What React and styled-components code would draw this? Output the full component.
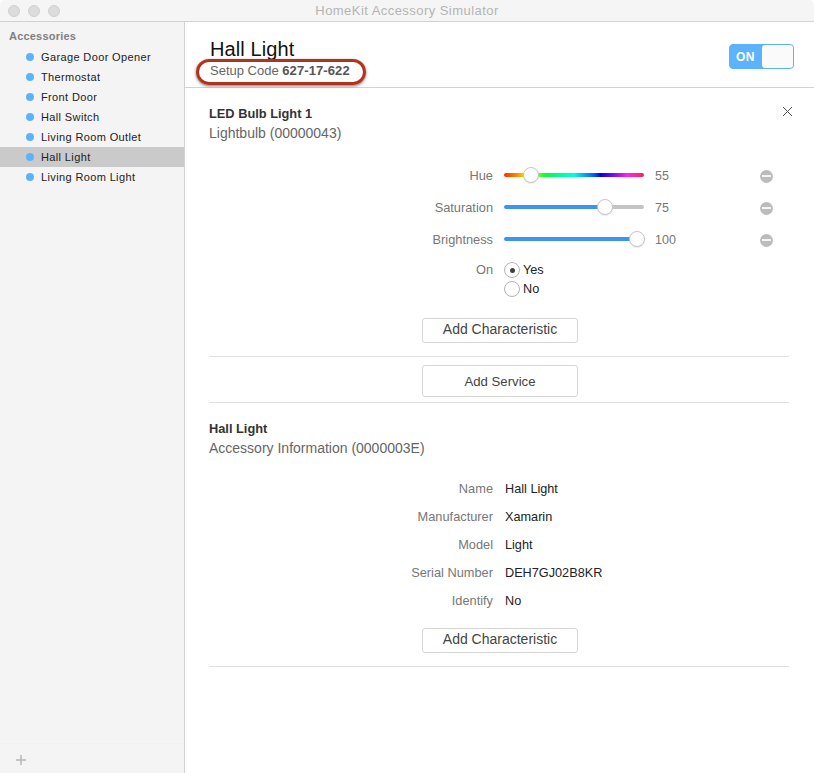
import React from 'react';
import styled, { createGlobalStyle } from 'styled-components';

const GlobalStyle = createGlobalStyle`
    html, body {
        margin: 0;
        padding: 0;
        background: #fff;
    }
    body {
        font-family: "Liberation Sans", Arial, sans-serif;
        color: #222;
    }
`;

const Window = styled.div`
    width: 814px;
    height: 773px;
    display: flex;
    flex-direction: column;
    overflow: hidden;
    background: #fff;
`;
const TitleBar = styled.header`
    position: relative;
    height: 21px;
    flex: none;
    display: flex;
    align-items: center;
    justify-content: center;
    background: #f5f5f5;
    border-bottom: 1px solid #d2d2d2;
    border-radius: 5px 5px 0 0;
`;
const Lights = styled.div`
    position: absolute;
    left: 8px;
    top: 5px;
    display: flex;
    gap: 8px;
`;
const Light = styled.span`
    width: 12px;
    height: 12px;
    border-radius: 50%;
    background: #dcdcdc;
    border: 1px solid #d0d0d0;
    box-sizing: border-box;
`;
const WindowTitle = styled.h1`
    margin: 0;
    font-size: 13px;
    font-weight: normal;
    color: #b4b4b4;
    letter-spacing: 0.45px;
`;
const Body = styled.div`
    flex: 1;
    display: flex;
    min-height: 0;
`;
const Sidebar = styled.aside`
    width: 184px;
    flex: none;
    display: flex;
    flex-direction: column;
    background: #f4f4f4;
    border-right: 1px solid #d2d2d2;
`;
const SideHead = styled.div`
    font-size: 11px;
    font-weight: bold;
    color: #808080;
    padding: 7px 0 4px 9px;
    line-height: 14px;
    letter-spacing: 0.2px;
`;
const SideList = styled.ul`
    list-style: none;
    margin: 0;
    padding: 0;
    flex: 1;
`;
const SideItem = styled.li`
    height: 20px;
    display: flex;
    align-items: center;
    padding-left: 26px;
    gap: 7px;
    font-size: 11px;
    letter-spacing: 0.37px;
    color: #222;
    background: ${p => (p.$active ? '#cacaca' : 'transparent')};
`;
const Dot = styled.span`
    width: 8px;
    height: 8px;
    border-radius: 50%;
    background: #5bb4fb;
`;
const SideFooter = styled.div`
    height: 30px;
    box-sizing: border-box;
    display: flex;
    align-items: center;
    padding: 2px 0 0 15px;
    border-top: 1px solid #f0f0f0;
`;
const Main = styled.main`
    flex: 1;
    min-width: 0;
    display: flex;
    flex-direction: column;
`;
const Header = styled.div`
    height: 66px;
    flex: none;
    box-sizing: border-box;
    padding: 16px 20px 0 25px;
    display: flex;
    justify-content: space-between;
    align-items: flex-start;
    border-bottom: 1px solid #d2d2d2;
`;
const HeaderText = styled.div`
    display: flex;
    flex-direction: column;
`;
const Title = styled.h2`
    margin: 0;
    font-size: 20px;
    line-height: 22px;
    font-weight: normal;
    color: #111;
    letter-spacing: 0.1px;
`;
const SetupCode = styled.div`
    position: relative;
    margin-top: 3px;
    font-size: 13px;
    line-height: 16px;
    color: #666;
    &::after {
        content: '';
        position: absolute;
        left: -14px;
        top: -4px;
        width: 170px;
        height: 26px;
        box-sizing: border-box;
        border: 3px solid #b3321c;
        border-radius: 13px;
        box-shadow: 0 1px 3px rgba(0, 0, 0, 0.55);
    }
    b {
        color: #555;
        letter-spacing: 0.1px;
    }
`;
const Toggle = styled.div`
    width: 65px;
    height: 25px;
    margin-top: 6px;
    box-sizing: border-box;
    border-radius: 4px;
    background: #5cb3fb;
    border: 1px solid #5cb3fb;
    display: flex;
    align-items: center;
    justify-content: space-between;
`;
const ToggleLabel = styled.span`
    color: #fff;
    font-size: 12px;
    font-weight: bold;
    padding-left: 6px;
    letter-spacing: 0.3px;
`;
const ToggleKnob = styled.span`
    width: 31px;
    height: 23px;
    border-radius: 3px;
    background: #fafafa;
`;
const Content = styled.div`
    flex: 1;
    padding: 0 25px 0 24px;
    position: relative;
`;
const Section = styled.section`
    position: relative;
    padding-top: ${p => (p.$flush ? 0 : 18)}px;
    border-bottom: 1px solid #e0e0e0;
`;
const SectionName = styled.h3`
    margin: 0;
    font-size: 12.8px;
    line-height: 16px;
    font-weight: bold;
    color: #333;
`;
const SectionType = styled.div`
    margin-top: 3px;
    font-size: 14px;
    line-height: 16px;
    color: #666;
`;
const Close = styled.button`
    position: absolute;
    right: -8px;
    top: 13px;
    width: 20px;
    height: 20px;
    padding: 0;
    border: 0;
    background: none;
    display: flex;
    align-items: center;
    justify-content: center;
`;
const Rows = styled.div`
    display: flex;
    flex-direction: column;
    margin-top: ${p => p.$top}px;
`;
const Row = styled.div`
    display: grid;
    grid-template-columns: 284px 140px 1fr 13px;
    column-gap: 11px;
    height: ${p => p.$h}px;
    align-items: center;
    padding-right: 16px;
`;
const RadioField = styled(Row)`
    align-items: start;
    padding-top: 6px;
    box-sizing: border-box;
`;
const Label = styled.div`
    font-size: 12.8px;
    line-height: 16px;
    text-align: right;
    color: #777;
`;
const Value = styled.div`
    padding-left: 1px;
    font-size: 12.7px;
    color: #222;
    white-space: nowrap;
`;
const SliderValue = styled.div`
    font-size: 12.5px;
    color: #777;
`;
const Track = styled.div`
    position: relative;
    height: 4px;
    margin-bottom: 2px;
    border-radius: 2px;
    background: ${p => p.$bg};
`;
const Thumb = styled.span`
    position: absolute;
    top: -6px;
    width: 16px;
    height: 16px;
    margin-left: -8px;
    box-sizing: border-box;
    border-radius: 50%;
    background: #fff;
    border: 1px solid #c4c4c4;
    box-shadow: 0 1px 1px rgba(0, 0, 0, 0.08);
`;
const Remove = styled.span`
    width: 13px;
    height: 13px;
    border-radius: 50%;
    background: #bcbcbc;
    display: flex;
    align-items: center;
    justify-content: center;
    &::before {
        content: '';
        width: 9px;
        height: 2px;
        background: #f4f4f4;
    }
`;
const RadioGroup = styled.div`
    grid-column: 2 / span 3;
    display: flex;
    flex-direction: column;
    gap: 3px;
`;
const RadioRow = styled.div`
    display: flex;
    align-items: center;
    gap: 3px;
    height: 16px;
    font-size: 12.7px;
    color: #222;
`;
const Radio = styled.span`
    width: 16px;
    height: 16px;
    box-sizing: border-box;
    border-radius: 50%;
    border: 1px solid #b4b4b4;
    background: #fff;
    display: flex;
    align-items: center;
    justify-content: center;
    &::before {
        content: '';
        width: 5px;
        height: 5px;
        border-radius: 50%;
        background: ${p => (p.$on ? '#404040' : 'transparent')};
    }
`;
const ButtonRow = styled.div`
    display: flex;
    justify-content: center;
    padding: ${p => p.$pad};
`;
const Button = styled.button`
    width: 156px;
    height: ${p => p.$h}px;
    padding: 0 0 ${p => p.$lift || 0}px;
    box-sizing: border-box;
    border: 1px solid #d6d6d6;
    border-radius: 3px;
    background: #fff;
    font-family: inherit;
    font-size: ${p => p.$size}px;
    color: #444;
`;

const accessories = ['Garage Door Opener', 'Thermostat', 'Front Door', 'Hall Switch', 'Living Room Outlet', 'Hall Light', 'Living Room Light'];

const hueTrack = 'linear-gradient(90deg, #ff2a00 0%, #ffc400 14%, #9dff00 22%, #00ff40 30%, #00ffe0 50%, #0060ff 64%, #0000e0 69%, #ff22ee 88%, #ff2050 100%)';
const fillTrack = pct => `linear-gradient(90deg, #3b94f0 ${pct}%, #c4c4c4 ${pct}%)`;

const sliders = [
    { name: 'Hue', value: 55, pos: 19.5, bg: hueTrack },
    { name: 'Saturation', value: 75, pos: 72, bg: fillTrack(72) },
    { name: 'Brightness', value: 100, pos: 95, bg: fillTrack(95) },
];

const info = [
    ['Name', 'Hall Light'],
    ['Manufacturer', 'Xamarin'],
    ['Model', 'Light'],
    ['Serial Number', 'DEH7GJ02B8KR'],
    ['Identify', 'No'],
];

const App = () => (
    <Window>
        <GlobalStyle />
        <TitleBar>
            <Lights>
                <Light />
                <Light />
                <Light />
            </Lights>
            <WindowTitle>HomeKit Accessory Simulator</WindowTitle>
        </TitleBar>
        <Body>
            <Sidebar>
                <SideHead>Accessories</SideHead>
                <SideList>
                    {accessories.map(name => (
                        <SideItem key={name} $active={name === 'Hall Light'}>
                            <Dot />
                            {name}
                        </SideItem>
                    ))}
                </SideList>
                <SideFooter>
                    <svg width="12" height="12" viewBox="0 0 12 12">
                        <path d="M6 1v10M1 6h10" stroke="#b4b4b4" strokeWidth="1.4" fill="none" />
                    </svg>
                </SideFooter>
            </Sidebar>
            <Main>
                <Header>
                    <HeaderText>
                        <Title>Hall Light</Title>
                        <SetupCode>Setup Code <b>627-17-622</b></SetupCode>
                    </HeaderText>
                    <Toggle>
                        <ToggleLabel>ON</ToggleLabel>
                        <ToggleKnob />
                    </Toggle>
                </Header>
                <Content>
                    <Section>
                        <SectionName>LED Bulb Light 1</SectionName>
                        <SectionType>Lightbulb (00000043)</SectionType>
                        <Close aria-label="Remove service">
                            <svg width="11" height="11" viewBox="0 0 11 11">
                                <path d="M1 1l9 9M10 1l-9 9" stroke="#555" strokeWidth="1" fill="none" />
                            </svg>
                        </Close>
                        <Rows $top={19}>
                            {sliders.map(s => (
                                <Row key={s.name} $h={32}>
                                    <Label>{s.name}</Label>
                                    <Track $bg={s.bg}>
                                        <Thumb style={{ left: `${s.pos}%` }} />
                                    </Track>
                                    <SliderValue>{s.value}</SliderValue>
                                    <Remove />
                                </Row>
                            ))}
                            <RadioField $h={42}>
                                <Label>On</Label>
                                <RadioGroup>
                                    <RadioRow><Radio $on />Yes</RadioRow>
                                    <RadioRow><Radio />No</RadioRow>
                                </RadioGroup>
                            </RadioField>
                        </Rows>
                        <ButtonRow $pad="20px 0 13px 2px">
                            <Button $h={25} $size={14} $lift={4}>Add Characteristic</Button>
                        </ButtonRow>
                    </Section>
                    <Section $flush>
                        <ButtonRow $pad="8px 0 5px 2px">
                            <Button $h={32} $size={13.2}>Add Service</Button>
                        </ButtonRow>
                    </Section>
                    <Section>
                        <SectionName>Hall Light</SectionName>
                        <SectionType>Accessory Information (0000003E)</SectionType>
                        <Rows $top={19}>
                            {info.map(([k, v]) => (
                                <Row key={k} $h={28}>
                                    <Label>{k}</Label>
                                    <Value>{v}</Value>
                                </Row>
                            ))}
                        </Rows>
                        <ButtonRow $pad="13px 0 13px 2px">
                            <Button $h={25} $size={14} $lift={4}>Add Characteristic</Button>
                        </ButtonRow>
                    </Section>
                </Content>
            </Main>
        </Body>
    </Window>
);

export default App;
